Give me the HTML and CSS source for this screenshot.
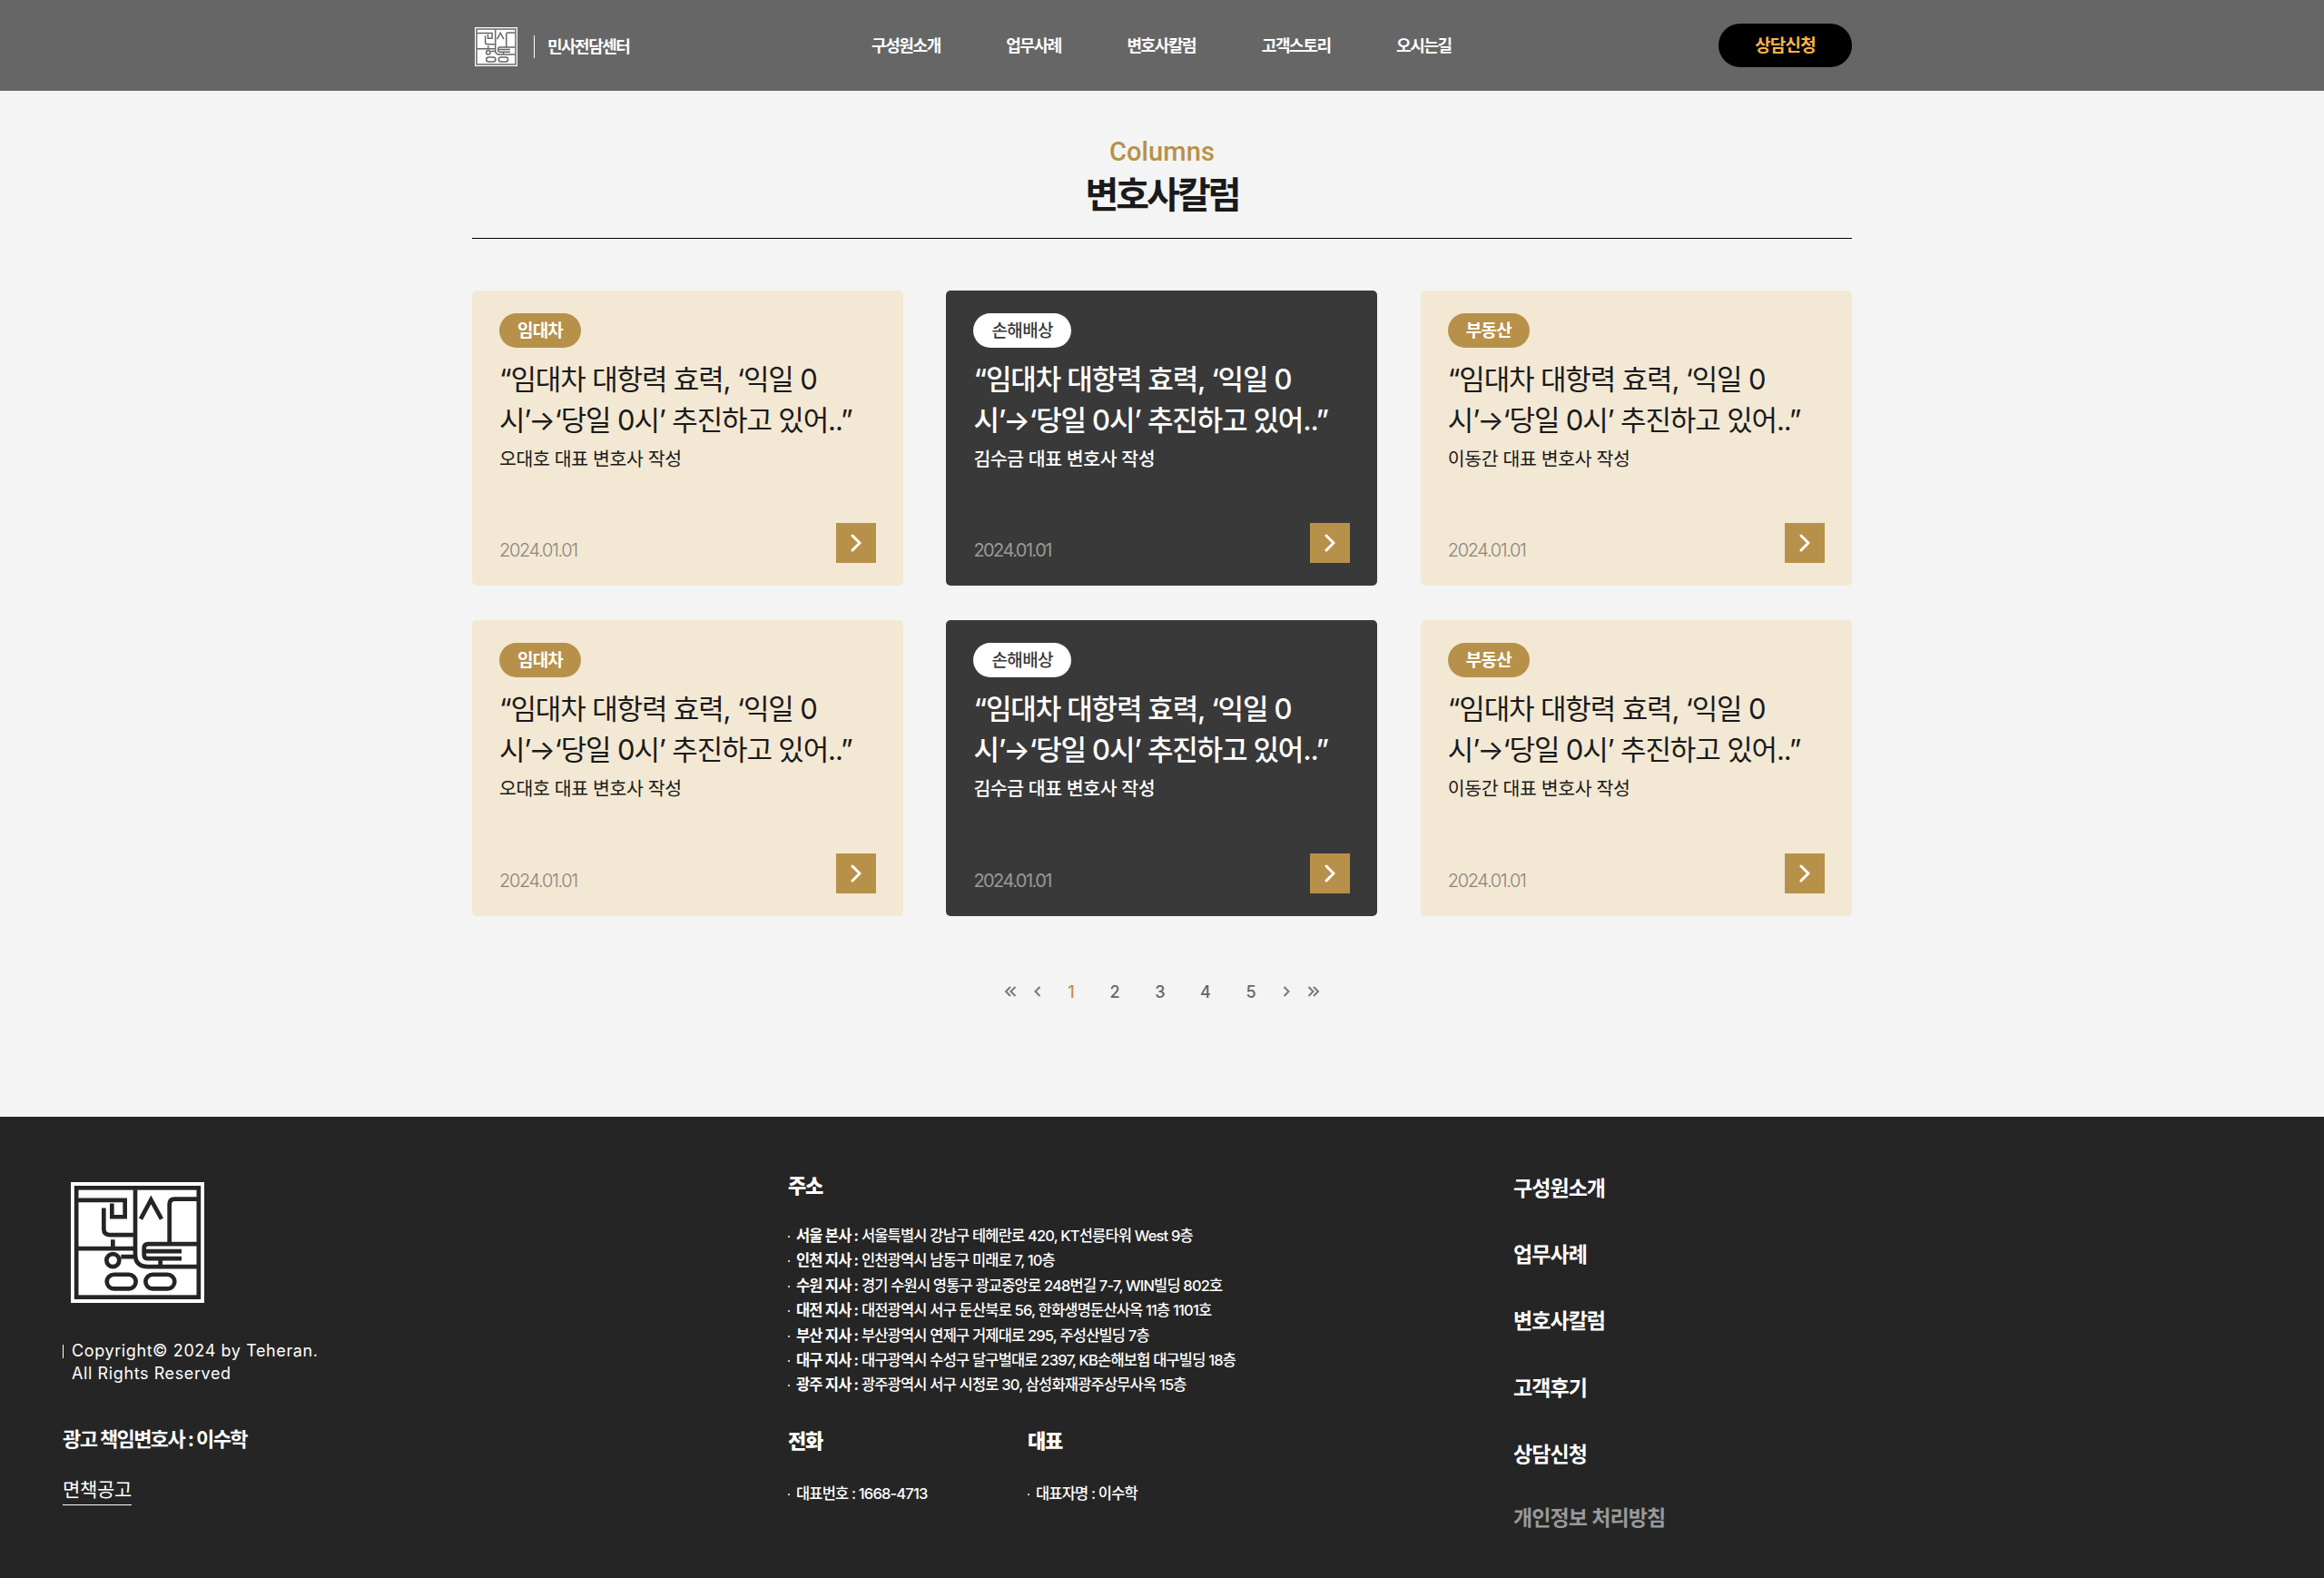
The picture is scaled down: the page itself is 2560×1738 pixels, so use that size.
FILE: index.html
```html
<!DOCTYPE html>
<html lang="ko">
<head>
<meta charset="utf-8">
<title>변호사칼럼 - 민사전담센터</title>
<link rel="stylesheet" href="styles.css">
</head>
<body>
<svg class="sprite" width="0" height="0" aria-hidden="true">
  <symbol id="logo" viewBox="84 65 441 400" preserveAspectRatio="none">
    <path class="logo-ground" d="M84 65h441v400H84z"/>
    <g class="logo-lines">
      <rect x="102.500" y="84" width="404" height="362"/>
      <path d="M108 125h155v55h-43v-44M193 151v70q0 19 20 19h84M297 90v215q0 40 42 40h162M108 285h189M223 255v30M250 312h44"/>
      <circle cx="223" cy="324" r="21"/>
      <path d="M315 187l34-64 35 64M501 121h-74q-17 0-17 18v130M501 270H340q-14 0-14 14v22q0 12 14 12h110M332 294h118M380 318v24"/>
      <rect x="203" y="371" width="96" height="47" rx="23.500"/>
      <rect x="331" y="371" width="96" height="47" rx="23.500"/>
    </g>
  </symbol>
  <symbol id="chevron" viewBox="0 0 12 20"><path d="M2 2l8 8-8 8"/></symbol>
</svg>

<header class="header">
  <div class="header-inner">
    <a class="brand"><svg class="brand-logo"><use href="#logo"/></svg><span class="brand-name">민사전담센터</span></a>
    <nav class="nav"><a>구성원소개</a><a>업무사례</a><a>변호사칼럼</a><a>고객스토리</a><a>오시는길</a></nav>
    <a class="consult">상담신청</a>
  </div>
</header>

<main class="main">
  <div class="page-title">
    <p class="page-title-en">Columns</p>
    <h1 class="page-title-ko">변호사칼럼</h1>
  </div>

  <section class="cards">
    <article class="card">
      <span class="badge">임대차</span>
      <h2 class="card-title">“임대차 대항력 효력, ‘익일 0<br>시’→‘당일 0시’ 추진하고 있어..”</h2>
      <p class="author">오대호 대표 변호사 작성</p>
      <div class="card-foot"><time>2024.01.01</time><a class="more"><svg><use href="#chevron"/></svg></a></div>
    </article>
    <article class="card card-dark">
      <span class="badge">손해배상</span>
      <h2 class="card-title">“임대차 대항력 효력, ‘익일 0<br>시’→‘당일 0시’ 추진하고 있어..”</h2>
      <p class="author">김수금 대표 변호사 작성</p>
      <div class="card-foot"><time>2024.01.01</time><a class="more"><svg><use href="#chevron"/></svg></a></div>
    </article>
    <article class="card">
      <span class="badge">부동산</span>
      <h2 class="card-title">“임대차 대항력 효력, ‘익일 0<br>시’→‘당일 0시’ 추진하고 있어..”</h2>
      <p class="author">이동간 대표 변호사 작성</p>
      <div class="card-foot"><time>2024.01.01</time><a class="more"><svg><use href="#chevron"/></svg></a></div>
    </article>
    <article class="card">
      <span class="badge">임대차</span>
      <h2 class="card-title">“임대차 대항력 효력, ‘익일 0<br>시’→‘당일 0시’ 추진하고 있어..”</h2>
      <p class="author">오대호 대표 변호사 작성</p>
      <div class="card-foot"><time>2024.01.01</time><a class="more"><svg><use href="#chevron"/></svg></a></div>
    </article>
    <article class="card card-dark">
      <span class="badge">손해배상</span>
      <h2 class="card-title">“임대차 대항력 효력, ‘익일 0<br>시’→‘당일 0시’ 추진하고 있어..”</h2>
      <p class="author">김수금 대표 변호사 작성</p>
      <div class="card-foot"><time>2024.01.01</time><a class="more"><svg><use href="#chevron"/></svg></a></div>
    </article>
    <article class="card">
      <span class="badge">부동산</span>
      <h2 class="card-title">“임대차 대항력 효력, ‘익일 0<br>시’→‘당일 0시’ 추진하고 있어..”</h2>
      <p class="author">이동간 대표 변호사 작성</p>
      <div class="card-foot"><time>2024.01.01</time><a class="more"><svg><use href="#chevron"/></svg></a></div>
    </article>
  </section>

  <nav class="pager">
    <a class="pager-arrow"><svg viewBox="0 0 12 12"><path d="M6 1L1 6l5 5M11.500 1l-5 5 5 5"/></svg></a>
    <a class="pager-arrow"><svg viewBox="0 0 12 12"><path d="M8.500 1l-5 5 5 5"/></svg></a>
    <div class="pages"><a class="page current">1</a><a class="page">2</a><a class="page">3</a><a class="page">4</a><a class="page">5</a></div>
    <a class="pager-arrow"><svg viewBox="0 0 12 12"><path d="M3.500 1l5 5-5 5"/></svg></a>
    <a class="pager-arrow"><svg viewBox="0 0 12 12"><path d="M.500 1l5 5-5 5M6 1l5 5-5 5"/></svg></a>
  </nav>
</main>

<footer class="footer">
  <div class="foot-about">
    <svg class="foot-logo"><use href="#logo"/></svg>
    <p class="copyright">Copyright© 2024 by Teheran.<br>All Rights Reserved</p>
    <p class="lawyer">광고 책임변호사 : 이수학</p>
    <a class="disclaimer">면책공고</a>
  </div>
  <div class="foot-info">
    <h3>주소</h3>
    <ul class="branches">
      <li><b>서울 본사 :</b> 서울특별시 강남구 테헤란로 420, KT선릉타워 West 9층</li>
      <li><b>인천 지사 :</b> 인천광역시 남동구 미래로 7, 10층</li>
      <li><b>수원 지사 :</b> 경기 수원시 영통구 광교중앙로 248번길 7-7, WIN빌딩 802호</li>
      <li><b>대전 지사 :</b> 대전광역시 서구 둔산북로 56, 한화생명둔산사옥 11층 1101호</li>
      <li><b>부산 지사 :</b> 부산광역시 연제구 거제대로 295, 주성산빌딩 7층</li>
      <li><b>대구 지사 :</b> 대구광역시 수성구 달구벌대로 2397, KB손해보험 대구빌딩 18층</li>
      <li><b>광주 지사 :</b> 광주광역시 서구 시청로 30, 삼성화재광주상무사옥 15층</li>
    </ul>
    <div class="contacts">
      <div><h3>전화</h3><ul><li>대표번호 : 1668-4713</li></ul></div>
      <div><h3>대표</h3><ul><li>대표자명 : 이수학</li></ul></div>
    </div>
  </div>
  <nav class="foot-nav"><a>구성원소개</a><a>업무사례</a><a>변호사칼럼</a><a>고객후기</a><a>상담신청</a><a class="privacy">개인정보 처리방침</a></nav>
</footer>
</body>
</html>
```
FILE: styles.css
```css
* { box-sizing: border-box; margin: 0; padding: 0; }

body {
  background: #f4f4f4;
  color: #1a1a1a;
  font-family: Inter, "Noto Sans CJK KR", sans-serif;
}

ul { list-style: none; }
svg { display: block; }
.sprite { position: absolute; }

.logo-ground { fill: #fff; }
.logo-lines { fill: none; stroke: var(--logo-line); stroke-width: 14; }

/* header */
.header { height: 100px; background: #666; color: #fff; --logo-line: #666; }
.header-inner {
  display: grid;
  grid-template-columns: 440px 1fr 147px;
  align-items: center;
  width: 1520px;
  height: 100px;
  margin: 0 auto;
}
.brand { display: flex; align-items: center; padding: 3px 0 0 3px; }
.brand-logo { width: 47px; height: 43px; }
.brand-name {
  display: flex;
  align-items: center;
  height: 25px;
  margin-left: 18px;
  padding: 0 0 3px 14px;
  border-left: 1px solid #fff;
  font-size: 18px;
  font-weight: 700;
  letter-spacing: -1.5px;
}
.nav { display: flex; gap: 72.500px; padding-top: 1px; font-size: 18px; font-weight: 700; letter-spacing: -1.400px; line-height: 26px; white-space: nowrap; }
.consult {
  height: 48px;
  border-radius: 24px;
  background: #000;
  color: #ffb347;
  font-size: 19px;
  font-weight: 600;
  letter-spacing: -.8px;
  line-height: 50px;
  text-align: center;
}

/* page */
.main { width: 1520px; height: 1130px; margin: 0 auto; }
.page-title { height: 163px; padding-top: 49px; border-bottom: 1px solid #000; text-align: center; }
.page-title-en { font: 500 29px/36px Roboto, sans-serif; letter-spacing: .1px; color: #b7914a; }
.page-title-ko { font-size: 40px; font-weight: 700; letter-spacing: -3px; line-height: 59px; }

.cards { display: grid; grid-template-columns: repeat(3, 475px); grid-template-rows: 325px 326px; gap: 38px 47.400px; padding-top: 57px; }
.card {
  display: flex;
  flex-direction: column;
  align-items: flex-start;
  padding: 25px 30px;
  border-radius: 5px;
  background: #f3e8d4;
}
.badge {
  height: 38px;
  padding: 0 20px;
  border-radius: 19px;
  background: #b7914a;
  color: #fff;
  font-size: 19px;
  font-weight: 700;
  letter-spacing: -.8px;
  line-height: 40px;
}
.card-title { margin-top: 12px; font-size: 31px; font-weight: 400; letter-spacing: -1.150px; line-height: 45px; white-space: nowrap; }
.author { margin-top: 6px; font-size: 20.500px; font-weight: 400; letter-spacing: -.400px; line-height: 30px; }
.card-foot { display: flex; justify-content: space-between; align-items: flex-end; width: 100%; margin-top: auto; }
.card-foot time { color: #8b857b; font-size: 20px; font-weight: 300; letter-spacing: -1.350px; line-height: 28px; }
.more { display: grid; place-items: center; width: 44px; height: 44px; background: #b7914a; }
.more svg { width: 12px; height: 20px; fill: none; stroke: #fff; stroke-width: 3; stroke-linecap: round; }
.card-dark { background: #393939; color: #fff; }
.card-dark .badge { background: #fff; color: #393939; font-weight: 500; letter-spacing: -.600px; }
.card-dark .card-title, .card-dark .author { font-weight: 500; }
.card-dark time { color: #999; font-weight: 400; letter-spacing: -1.550px; }

.pager { display: flex; justify-content: center; align-items: center; height: 40px; margin-top: 63px; }
.pages { display: flex; margin: 0 -1px; }
.page { width: 50px; color: #666; font-size: 18px; font-weight: 500; text-align: center; }
.page.current { width: 46px; color: #b7914a; }
.pager-arrow { display: grid; place-items: center; width: 30px; }
.pager-arrow svg { width: 12px; height: 12px; fill: none; stroke: #777; stroke-width: 2; overflow: visible; }

/* footer */
.footer {
  display: grid;
  grid-template-columns: 798px 800px 1fr;
  height: 508px;
  padding-left: 69px;
  background: #252525;
  color: #fff;
  --logo-line: #252525;
}
.foot-about { padding-top: 72px; }
.foot-logo { width: 147px; height: 133px; margin-left: 9px; }
.copyright {
  margin-top: 40px;
  padding-left: 10px;
  background: linear-gradient(#fff, #fff) 0 6px / 1px 15px no-repeat;
  font-size: 18px;
  letter-spacing: .600px;
  line-height: 25px;
}
.lawyer { margin-top: 44px; font-size: 22px; font-weight: 700; letter-spacing: -1.600px; line-height: 32px; }
.disclaimer { display: inline-block; height: 34px; margin-top: 23px; border-bottom: 1px solid #fff; font-size: 21px; letter-spacing: -.300px; line-height: 33px; }

.foot-info { padding-top: 60px; }
.foot-info h3 { padding-left: 1px; font-size: 22px; font-weight: 800; letter-spacing: -1.200px; line-height: 32px; }
.foot-info li { position: relative; padding-left: 10px; font-size: 16.500px; font-weight: 500; letter-spacing: -.820px; line-height: 27.400px; white-space: nowrap; }
.foot-info li::before { content: ""; position: absolute; left: 1px; top: 13px; width: 2px; height: 2px; background: #ccc; }
.branches { margin-top: 26px; }
.contacts { display: grid; grid-template-columns: 264px 1fr; margin-top: 31px; }
.contacts ul { margin-top: 29px; }

.foot-nav { display: flex; flex-direction: column; padding-top: 61px; font-size: 23px; font-weight: 700; letter-spacing: -.950px; word-spacing: 1px; }
.foot-nav a { height: 73.200px; line-height: 36px; }
.foot-nav .privacy { margin-top: -3px; color: #999; }
```
